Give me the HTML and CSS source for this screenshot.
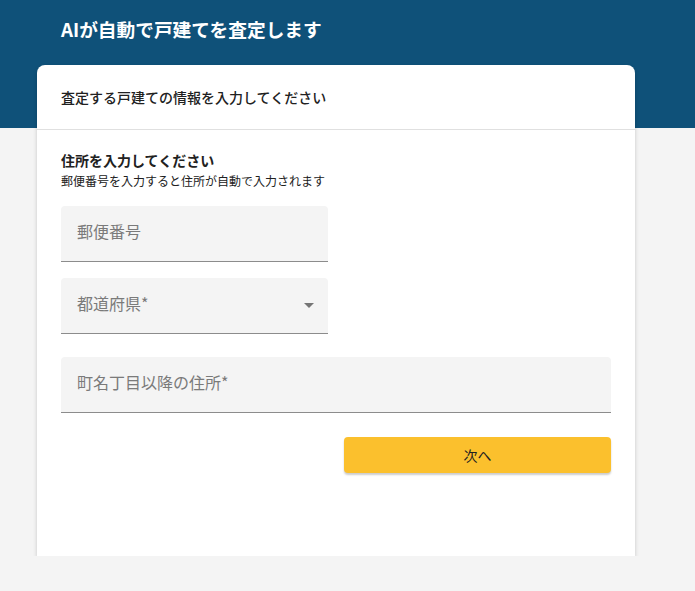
FILE: index.html
```html
<!doctype html>
<html lang="ja">
<head>
    <meta charset="UTF-8">
    <title>AIが自動で戸建てを査定します</title>
    <link rel="stylesheet" href="styles.css">
</head>
<body>
<div class="top-band">
    <h1 class="page-title">AIが自動で戸建てを査定します</h1>
</div>
<div class="card">
    <div class="card-head">査定する戸建ての情報を入力してください</div>
    <div class="card-body">
        <div class="sec-title">住所を入力してください</div>
        <div class="sec-note">郵便番号を入力すると住所が自動で入力されます</div>
        <div class="field half first">
            <span class="ph">郵便番号</span>
        </div>
        <div class="field half select">
            <span class="ph">都道府県*</span>
            <span class="arrow"></span>
        </div>
        <div class="field full">
            <span class="ph">町名丁目以降の住所*</span>
        </div>
        <div class="actions">
            <button class="btn-next" type="button">次へ</button>
        </div>
    </div>
</div>
</body>
</html>
```

FILE: styles.css
```css
html, body {
    margin: 0;
    padding: 0;
}
body {
    background: #f4f4f4;
    font-family: "Noto Sans CJK JP", "Noto Sans", sans-serif;
    color: #212121;
}
.top-band {
    height: 128px;
    background: #0f5179;
    padding-left: 61px;
    box-sizing: border-box;
}
.page-title {
    margin: 0;
    padding-top: 16px;
    font-size: 18.7px;
    line-height: 26px;
    font-weight: bold;
    color: #fff;
}
.card {
    margin: -63px 0 0 37px;
    width: 598px;
    height: 491px;
    background: #fff;
    border-radius: 8px 8px 0 0;
    box-shadow: 0 2px 4px rgba(0, 0, 0, 0.18);
}
.card-head {
    height: 64px;
    padding: 0 24px;
    display: flex;
    align-items: center;
    font-size: 14px;
    font-weight: 500;
    border-bottom: 1px solid #e0e0e0;
}
.card-body {
    padding: 22px 24px 0;
}
.sec-title {
    font-size: 14px;
    line-height: 16px;
    font-weight: bold;
}
.sec-note {
    margin-top: 5px;
    font-size: 12px;
    line-height: 16px;
}
.field {
    height: 55px;
    background: #f4f4f4;
    border-bottom: 1px solid #8c8c8c;
    border-radius: 4px 4px 0 0;
    padding: 0 16px;
    display: flex;
    align-items: center;
    justify-content: space-between;
    margin-top: 16px;
}
.field.first {
    margin-top: 17px;
}
.field.full {
    margin-top: 23px;
}
.half {
    width: 235px;
}
.ph {
    font-size: 16px;
    color: #7a7a7a;
    margin-bottom: 5px;
}
.arrow {
    width: 0;
    height: 0;
    border-left: 5px solid transparent;
    border-right: 5px solid transparent;
    border-top: 5px solid #757575;
    margin-right: -2px;
}
.actions {
    display: flex;
    justify-content: flex-end;
    margin-top: 24px;
}
.btn-next {
    width: 267px;
    height: 36px;
    border: none;
    border-radius: 4px;
    background: #fbc02d;
    font-family: inherit;
    font-size: 14px;
    color: #212121;
    padding-bottom: 2px;
    box-shadow: 0 2px 2px rgba(0, 0, 0, 0.2);
}
```
